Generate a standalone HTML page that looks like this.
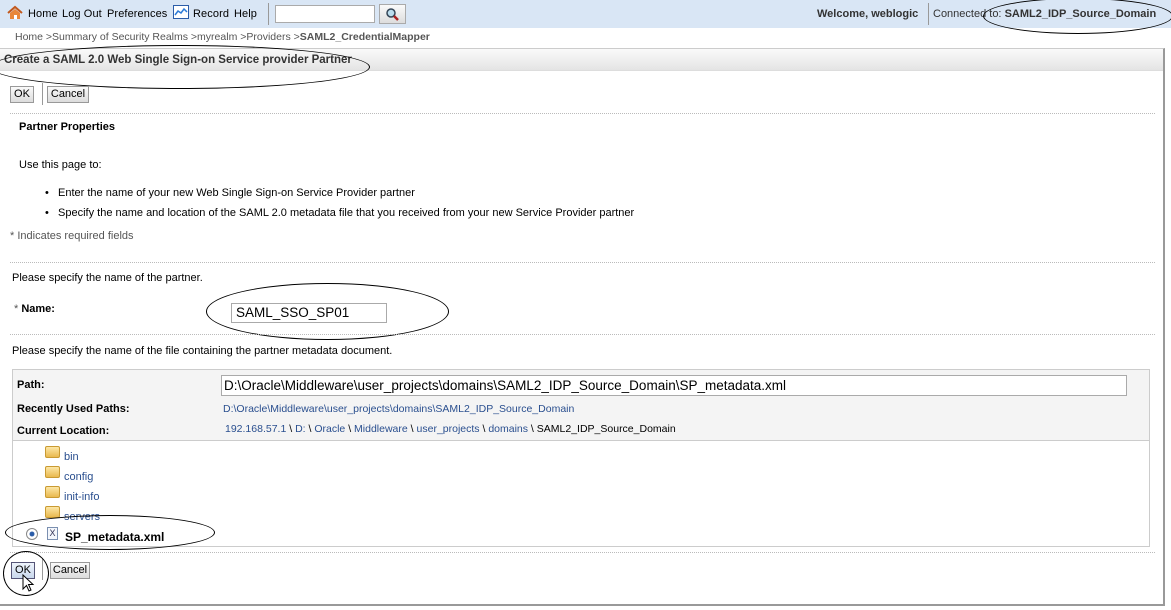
<!DOCTYPE html>
<html><head><meta charset="utf-8"><style>
*{margin:0;padding:0;box-sizing:border-box}
body{width:1171px;height:610px;background:#fff;font-family:"Liberation Sans",Tahoma,sans-serif;font-size:11px;color:#000;position:relative;overflow:hidden}
.a{position:absolute;white-space:nowrap}
.top{left:0;top:0;width:1171px;height:28px;background:#d9e6f5}
.nav{font-size:11px;top:8px;letter-spacing:0.1px}
.dot{position:absolute;height:0;border-top:1px dotted #bbb}
.btn{position:absolute;height:17px;border:1px solid #999;background:linear-gradient(#fafafa,#dcdcdc);font-size:11px;line-height:15px;text-align:center}
a,.lnk{color:#2a4f8f}
.b{font-weight:bold}
.fold{position:absolute;width:15px;height:12px;background:linear-gradient(#fde7a6,#e9b94f);border:1px solid #c99a32;border-radius:2px}
.ell{position:absolute;border:1px solid #000;border-radius:50%}
</style></head><body>
<div class="a top"></div>
<svg class="a" style="left:7px;top:5px" width="16" height="16" viewBox="0 0 16 16"><path d="M1 8 L8 2 L15 8" fill="none" stroke="#c2581c" stroke-width="2"/><path d="M3 8 V14 H13 V8 L8 4Z" fill="#e8873a"/><rect x="7" y="10" width="3" height="4" fill="#fff"/></svg>
<div class="a nav" style="left:28px">Home</div>
<div class="a nav" style="left:62px">Log Out</div>
<div class="a nav" style="left:107px">Preferences</div>
<svg class="a" style="left:173px;top:5px" width="16" height="14"><rect x="0.5" y="0.5" width="15" height="13" fill="#fff" stroke="#2a5ca8"/><path d="M2 10 L5 6 L8 8 L11 4 L14 7" fill="none" stroke="#2a7ad8" stroke-width="1.5"/></svg>
<div class="a nav" style="left:193px">Record</div>
<div class="a nav" style="left:234px">Help</div>
<div class="a" style="left:268px;top:3px;width:1px;height:22px;background:#999"></div>
<div class="a" style="left:275px;top:5px;width:100px;height:18px;background:#fff;border:1px solid #aaa"></div>
<div class="a" style="left:379px;top:4px;width:27px;height:20px;border:1px solid #aaa;background:linear-gradient(#fafafa,#ddd)"></div>
<svg class="a" style="left:385px;top:7px" width="15" height="15"><circle cx="6" cy="6" r="4" fill="#bde" stroke="#345" stroke-width="1.5"/><path d="M9 9 L13 13" stroke="#a22" stroke-width="2.5"/></svg>
<div class="a b" style="left:817px;top:8px;font-size:11px;color:#333">Welcome, weblogic</div>
<div class="a" style="left:928px;top:3px;width:1px;height:22px;background:#999"></div>
<div class="a" style="left:933px;top:8px;font-size:11px;color:#333">Connected to: <b>SAML2_IDP_Source_Domain</b></div>
<div class="ell" style="left:983px;top:-2px;width:190px;height:36px"></div>

<div class="a" style="left:15px;top:31px;color:#555;font-size:10.5px">Home &gt;Summary of Security Realms &gt;myrealm &gt;Providers &gt;<b>SAML2_CredentialMapper</b></div>

<div class="a" style="left:0;top:48px;width:1165px;height:558px;border-right:2px solid #999;border-bottom:2px solid #999;border-top:1px solid #ccc"></div>
<div class="a" style="left:0;top:49px;width:1163px;height:22px;background:linear-gradient(#fafafa,#e4e4e4);border-bottom:1px solid #ddd"></div>
<div class="a b" style="left:4px;top:54px;font-size:11.5px;color:#333">Create a SAML 2.0 Web Single Sign-on Service provider Partner</div>
<div class="ell" style="left:-10px;top:45px;width:380px;height:44px"></div>

<div class="btn" style="left:10px;top:86px;width:24px">OK</div>
<div class="a" style="left:42px;top:83px;width:1px;height:22px;background:#999"></div>
<div class="btn" style="left:47px;top:86px;width:42px">Cancel</div>
<div class="dot" style="left:10px;top:113px;width:1145px"></div>

<div class="a b" style="left:19px;top:121px">Partner Properties</div>
<div class="a" style="left:19px;top:159px">Use this page to:</div>
<div class="a" style="left:45px;top:187px">•&nbsp;&nbsp;&nbsp;Enter the name of your new Web Single Sign-on Service Provider partner</div>
<div class="a" style="left:45px;top:207px">•&nbsp;&nbsp;&nbsp;Specify the name and location of the SAML 2.0 metadata file that you received from your new Service Provider partner</div>
<div class="a" style="left:10px;top:230px;color:#555">* Indicates required fields</div>
<div class="dot" style="left:10px;top:262px;width:1145px"></div>

<div class="a" style="left:12px;top:272px">Please specify the name of the partner.</div>
<div class="a" style="left:14px;top:303px"><span style="color:#555">*</span> <b>Name:</b></div>
<div class="a" style="left:231px;top:303px;width:156px;height:20px;border:1px solid #aaa;font-size:13.5px;line-height:18px;padding-left:4px">SAML_SSO_SP01</div>
<div class="ell" style="left:206px;top:283px;width:243px;height:57px"></div>
<div class="dot" style="left:10px;top:334px;width:1145px"></div>
<div class="a" style="left:12px;top:345px">Please specify the name of the file containing the partner metadata document.</div>

<div class="a" style="left:12px;top:369px;width:1138px;height:178px;border:1px solid #ccc"></div>
<div class="a" style="left:13px;top:370px;width:1136px;height:71px;background:#f4f4f4;border-bottom:1px solid #ccc"></div>
<div class="a b" style="left:17px;top:379px">Path:</div>
<div class="a" style="left:221px;top:375px;width:906px;height:21px;background:#fff;border:1px solid #aaa;font-size:13.5px;line-height:19px;padding-left:2px">D:\Oracle\Middleware\user_projects\domains\SAML2_IDP_Source_Domain\SP_metadata.xml</div>
<div class="a b" style="left:17px;top:403px">Recently Used Paths:</div>
<div class="a lnk" style="left:223px;top:403px;font-size:10.5px">D:\Oracle\Middleware\user_projects\domains\SAML2_IDP_Source_Domain</div>
<div class="a b" style="left:17px;top:425px">Current Location:</div>
<div class="a" style="left:225px;top:423px;font-size:10.5px"><span class="lnk">192.168.57.1</span> \ <span class="lnk">D:</span> \ <span class="lnk">Oracle</span> \ <span class="lnk">Middleware</span> \ <span class="lnk">user_projects</span> \ <span class="lnk">domains</span> \ SAML2_IDP_Source_Domain</div>

<div class="fold" style="left:45px;top:446px"></div><div class="a lnk" style="left:64px;top:451px">bin</div>
<div class="fold" style="left:45px;top:466px"></div><div class="a lnk" style="left:64px;top:471px">config</div>
<div class="fold" style="left:45px;top:486px"></div><div class="a lnk" style="left:64px;top:491px">init-info</div>
<div class="fold" style="left:45px;top:506px"></div><div class="a lnk" style="left:64px;top:511px">servers</div>
<div class="a" style="left:26px;top:528px;width:12px;height:12px;border-radius:50%;border:1px solid #888;background:radial-gradient(#2a5ca8 30%,#fff 40%)"></div>
<div class="a" style="left:47px;top:527px;width:11px;height:13px;border:1px solid #7a8fb0;background:#f4f7fc;font-size:9px;text-align:center;line-height:11px;color:#335">X</div>
<div class="a b" style="left:65px;top:530px;font-size:12px">SP_metadata.xml</div>
<div class="ell" style="left:5px;top:515px;width:210px;height:35px"></div>
<div class="dot" style="left:10px;top:552px;width:1145px"></div>

<div class="btn" style="left:11px;top:562px;width:24px;border-color:#557;background:linear-gradient(#eef4fc,#c9d8ec)">OK</div>
<div class="a" style="left:42px;top:558px;width:1px;height:22px;background:#999"></div>
<div class="btn" style="left:50px;top:562px;width:40px">Cancel</div>
<div class="ell" style="left:3px;top:551px;width:46px;height:45px"></div>
<svg class="a" style="left:22px;top:574px" width="14" height="20"><path d="M1 1 V15 L4.5 11.5 L7 17 L9 16 L6.5 10.5 L11 10.5Z" fill="#fff" stroke="#000"/></svg>
</body></html>
